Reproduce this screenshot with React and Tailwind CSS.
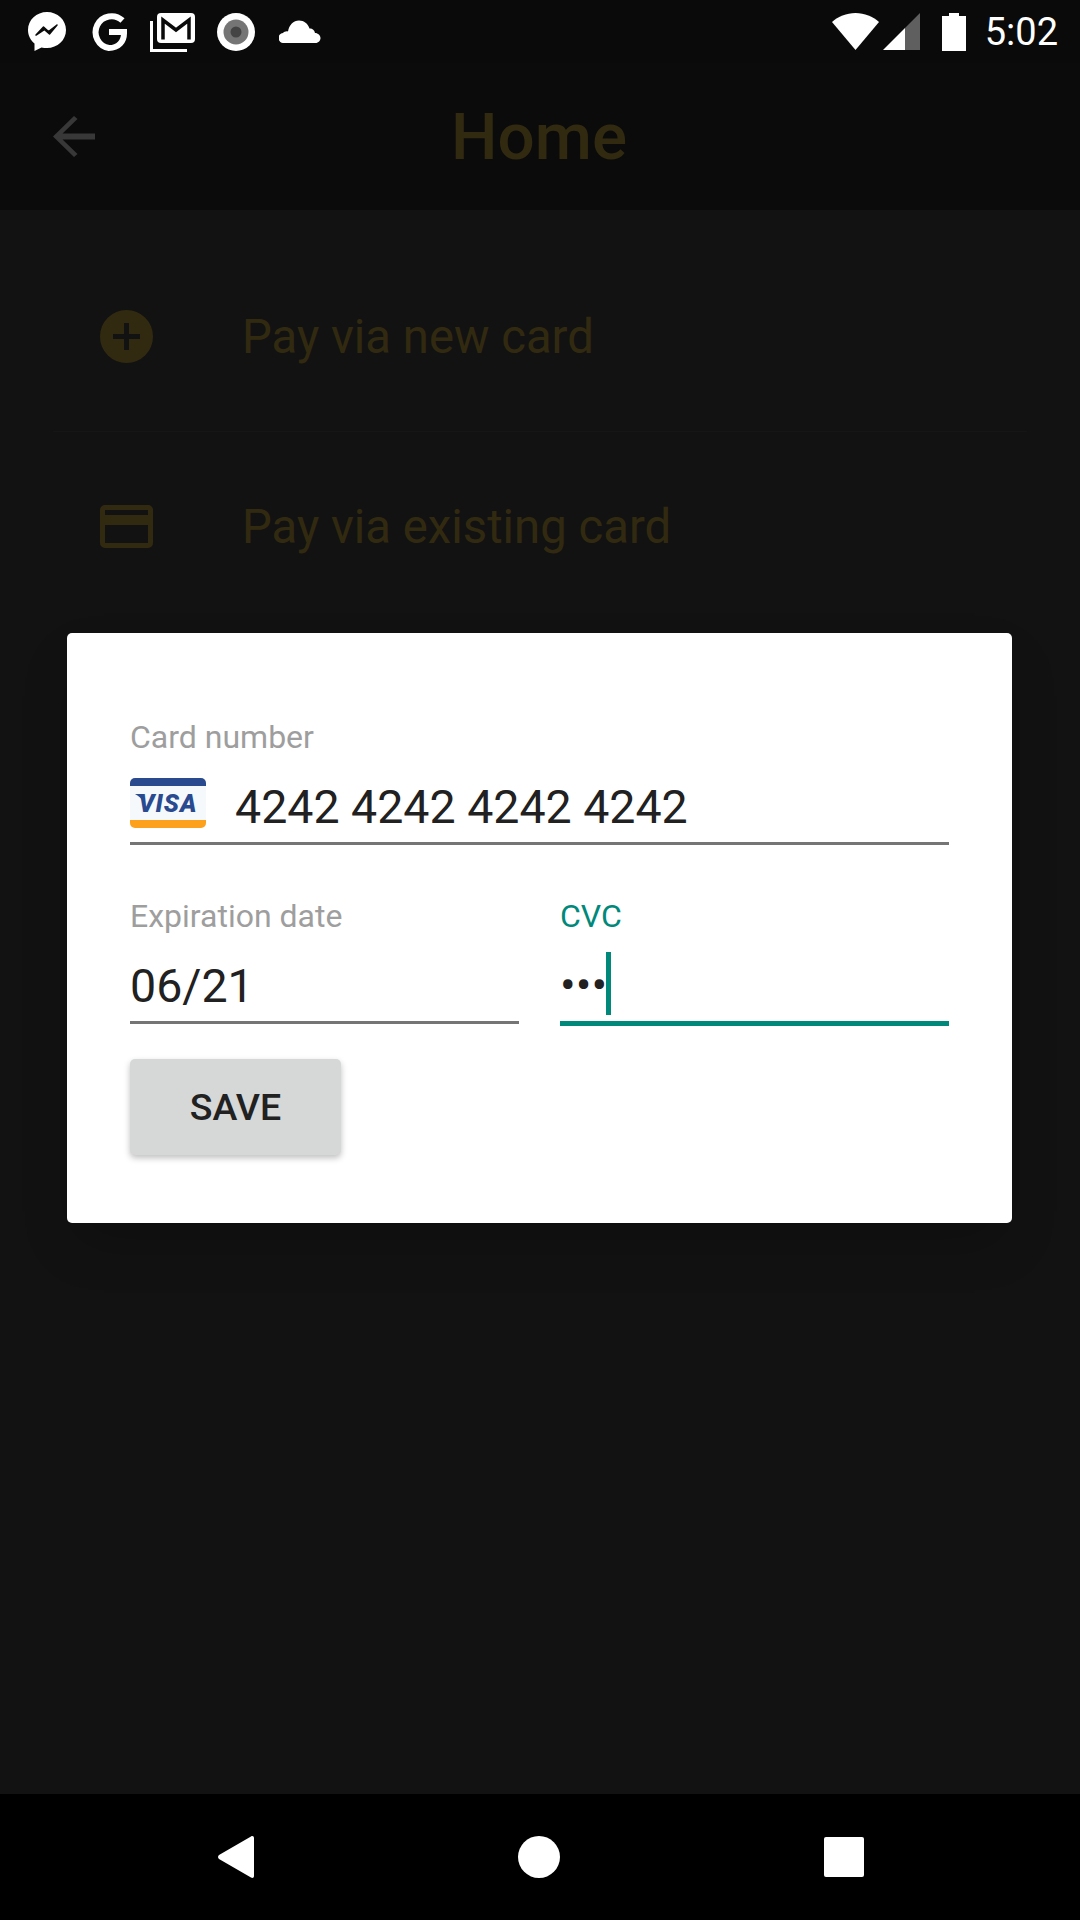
import React from 'react';

const StatusIcons = () => (
  <div className="flex items-center">
    {/* messenger */}
    <svg className="ml-[27px]" width="40" height="42" viewBox="0 0 40 42">
      <path d="M20 1C9.500 1 1 8.900 1 19c0 5.500 2.500 10.200 6.500 13.500V40l7-3.600c1.700.4 3.600.6 5.500.6 10.500 0 19-7.900 19-18S30.500 1 20 1z" fill="#fff" />
      <path d="M9 24l7.500-8 5 4.500L30 14l-7.500 9-5.200-4.500z" fill="#0a0a0a" stroke="#0a0a0a" strokeWidth="1.500" strokeLinejoin="round" />
    </svg>
    {/* google */}
    <svg className="ml-[23px]" width="38" height="38" viewBox="0 0 38 38">
      <path d="M32.500 7.500A16 16 0 1 0 19 35c9.500 0 15-6.500 15-14.500v-1.500H19" fill="none" stroke="#fff" strokeWidth="6" />
    </svg>
    {/* gmail stack */}
    <svg className="ml-[22px]" width="46" height="40" viewBox="0 0 46 40">
      <path d="M1.500 9v29.500H37" fill="none" stroke="#fff" strokeWidth="3" />
      <rect x="7" y="1" width="38" height="30" rx="4" fill="#fff" />
      <path d="M13 27.500V8l13 10L39 8v19.500" fill="none" stroke="#0a0a0a" strokeWidth="3.500" />
    </svg>
    {/* circle app */}
    <svg className="ml-[21px]" width="38" height="38" viewBox="0 0 38 38">
      <circle cx="19" cy="19" r="19" fill="#fff" />
      <circle cx="19" cy="19" r="12.500" fill="#757575" />
      <circle cx="19" cy="19" r="5.500" fill="#444" />
    </svg>
    {/* cloud */}
    <svg className="ml-[24px]" width="42" height="23" viewBox="0 0 42 23">
      <path d="M5 23a5 5 0 0 1-1-10c1-1 3-2 5-1.500C10 5 14.500 0.500 20 0.500c5 0 9 3 10.500 8 2-.5 5 1 5.500 4.500 3 0 5.500 2.500 5.500 5s-2 5-5 5z" fill="#fff" />
    </svg>
  </div>
);

const StatusRight = () => (
  <div className="flex items-center">
    <svg width="47" height="37" viewBox="0 0 47 37">
      <path d="M0 9C6 3.500 14.500 0 23.500 0S41 3.500 47 9L23.500 37z" fill="#fff" />
    </svg>
    <svg className="ml-[4px]" width="37" height="37" viewBox="0 0 37 37">
      <path d="M37 0v37H22V15z" fill="#5f5f5f" />
      <path d="M22 15v22H0z" fill="#fff" />
    </svg>
    <svg className="ml-[22px]" width="24" height="38" viewBox="0 0 24 38">
      <path d="M7 0h10v3h7v35H0V3h7z" fill="#fff" />
    </svg>
    <span className="ml-[19px] mr-[22px] text-[38px] leading-none text-white">5:02</span>
  </div>
);

const ListRow = ({ icon, label, divider }) => (
  <div className={`flex items-center mx-[53px] py-[63px] ${divider ? 'border-b border-[#161616]' : ''}`}>
    <div className="ml-[42px] w-[63px] h-[63px] flex items-center justify-center">{icon}</div>
    <span className="ml-[84px] mt-[3px] text-[47.250px] leading-none text-[#322a10]">{label}</span>
  </div>
);

const Field = ({ label, active, className, children }) => (
  <div className={className}>
    <div className={`text-[32px] leading-[37px] ${active ? 'text-[#00897b]' : 'text-[#9e9e9e]'}`}>{label}</div>
    <div className={`flex items-center mt-[8px] text-[46.500px] text-[#212121] leading-none ${active ? 'h-[83px] border-b-[5px] border-[#00897b]' : 'h-[81px] border-b-[3px] border-[#757575]'}`}>
      {children}
    </div>
  </div>
);

const VisaBadge = () => (
  <div className="w-[76px] h-[50px] rounded-[5px] overflow-hidden flex flex-col bg-[#f6f9fc]">
    <div className="h-[8px] bg-[#2a4a90]" />
    <div className="flex-1 flex items-center justify-center text-[25px] leading-none font-black italic tracking-[1px] text-[#2a4a90]">
      <span className="relative">
        VISA
        <svg className="absolute left-[-3px] top-[3px]" width="9" height="9" viewBox="0 0 9 9">
          <path d="M0 0h8l1 9C7 5 4 2 0 0z" fill="#2a4a90" />
        </svg>
      </span>
    </div>
    <div className="h-[8px] bg-[#fda01c]" />
  </div>
);

export default function App() {
  return (
    <div className="relative w-[1080px] h-[1920px] flex flex-col bg-[#121212] font-['Roboto',sans-serif] overflow-hidden">
      {/* Status bar */}
      <div className="h-[63px] flex items-center justify-between bg-[#0a0a0a]">
        <StatusIcons />
        <StatusRight />
      </div>

      {/* App bar */}
      <div className="relative h-[147px] flex items-center justify-center bg-[#0b0b0b]">
        <svg className="absolute left-[53px] top-[53px]" width="42" height="41" viewBox="0 0 42 41">
          <path d="M42 17.500H9.500L24.500 3 21 0 0 20.500 21 41l3.500-3-15-14.500H42z" fill="#383838" />
        </svg>
        <span className="mr-[2px] text-[65.600px] leading-none font-medium text-[#322a10]">Home</span>
      </div>

      {/* List behind the dialog */}
      <div className="flex-1 pt-[32px]">
        <ListRow
          divider
          label="Pay via new card"
          icon={
            <svg width="53" height="53" viewBox="0 0 53 53">
              <circle cx="26.500" cy="26.500" r="26.500" fill="#322a10" />
              <path d="M24 13h5v11h11v5H29v11h-5V29H13v-5h11z" fill="#121212" />
            </svg>
          }
        />
        <ListRow
          label="Pay via existing card"
          icon={
            <svg width="53" height="43" viewBox="0 0 53 43">
              <path d="M5 0h43a5 5 0 0 1 5 5v33a5 5 0 0 1-5 5H5a5 5 0 0 1-5-5V5a5 5 0 0 1 5-5zm0 5v5h43V5zm0 15v18h43V20z" fill="#322a10" fillRule="evenodd" />
            </svg>
          }
        />
      </div>

      {/* Nav bar */}
      <div className="h-[126px] flex items-center justify-between bg-black pl-[218px] pr-[216px]">
        <svg width="36" height="42" viewBox="0 0 36 42">
          <path d="M33 0.500c1.500-1 3-.3 3 1.500v38c0 1.800-1.500 2.500-3 1.500L1 23c-1.300-1-1.300-3 0-4z" fill="#fff" />
        </svg>
        <div className="w-[42px] h-[42px] rounded-full bg-white" />
        <div className="w-[40px] h-[40px] rounded-[2px] bg-white" />
      </div>

      {/* Dialog */}
      <div className="absolute left-[67px] top-[633px] w-[945px] h-[590px] bg-white rounded-[5px] shadow-2xl px-[63px] pt-[1px]">
        <Field label="Card number" className="mt-[85px]">
          <VisaBadge />
          <span className="ml-[29px] mt-[8px]">4242 4242 4242 4242</span>
        </Field>
        <div className="flex gap-[41px] mt-[53px]">
          <Field label="Expiration date" className="flex-1">
            <span className="mt-[8px]">06/21</span>
          </Field>
          <Field label="CVC" active className="flex-1">
            <span className="mt-[6px]">•••</span>
            <div className="w-[5px] h-[63px] bg-[#00897b] ml-[-1px] mt-[3px]" />
          </Field>
        </div>
        <button className="mt-[33px] w-[211px] h-[96px] pt-[2px] bg-[#d6d7d7] rounded-[5px] shadow-[0_3px_6px_rgba(0,0,0,0.25)] text-[37.500px] font-medium leading-none text-[#212121]">
          SAVE
        </button>
      </div>
    </div>
  );
}
